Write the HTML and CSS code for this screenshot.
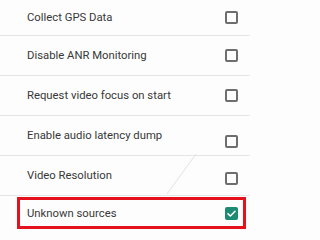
FILE: index.html
```html
<!DOCTYPE html>
<html>
<head>
<meta charset="utf-8">
<link rel="stylesheet" href="styles.css">
</head>
<body>
<div class="list">
  <div class="row first"><span class="label">Collect GPS Data</span><span class="box"></span></div>
  <div class="row"><span class="label">Disable ANR Monitoring</span><span class="box"></span></div>
  <div class="row"><span class="label">Request video focus on start</span><span class="box"></span></div>
  <div class="row"><span class="label">Enable audio latency dump</span><span class="box low"></span></div>
  <div class="row"><span class="label">Video Resolution</span><span class="box lower"></span></div>
  <div class="row last">
    <div class="highlight">
      <span class="label">Unknown sources</span>
      <span class="box checked"><svg viewBox="0 0 13 13" width="13" height="13"><path d="M3 6.8 L5.4 9 L10 4.3" fill="none" stroke="#fff" stroke-width="1.6" stroke-linecap="round" stroke-linejoin="round"/></svg></span>
    </div>
  </div>
  <div class="bottombar"></div>
  <svg class="streak" width="250" height="236" viewBox="0 0 250 236"><line x1="196" y1="154" x2="167" y2="194" stroke="#e2e2e2" stroke-width="1"/></svg>
</div>
</body>
</html>
```
FILE: styles.css
```css
html, body {
  margin: 0;
  padding: 0;
  background: #fdfdfd;
  overflow: hidden;
}
.list {
  position: relative;
  width: 250px;
  height: 236px;
  margin-top: -4px;
  font-family: Roboto, "Noto Sans", sans-serif;
  font-size: 11.3px;
  color: #383838;
}
.row {
  box-sizing: border-box;
  height: 40px;
  border-bottom: 1px solid #e6e6e6;
  display: flex;
  align-items: center;
  justify-content: space-between;
  padding: 0 12px 0 27px;
}
.row.first {
  padding-top: 4px;
}
.box {
  box-sizing: border-box;
  width: 13px;
  height: 13px;
  border: 2px solid #6e6e6e;
  border-radius: 2px;
  flex: none;
}
.box.low {
  margin-top: 12px;
}
.box.lower {
  margin-top: 6px;
}
.row.last {
  height: 37px;
  border-bottom: none;
  padding: 0;
  align-items: stretch;
}
.highlight {
  box-sizing: border-box;
  margin: 1px 0 4px 17px;
  width: 229px;
  border: 3px solid #e5121e;
  display: flex;
  align-items: center;
  justify-content: space-between;
  padding: 0 5px 0 7px;
}
.box.checked {
  border: none;
  background: #1d8a74;
  display: flex;
}
.bottombar {
  height: 3px;
  background: #2b2b2b;
}
.streak {
  position: absolute;
  left: 0;
  top: 4px;
  pointer-events: none;
}
```
